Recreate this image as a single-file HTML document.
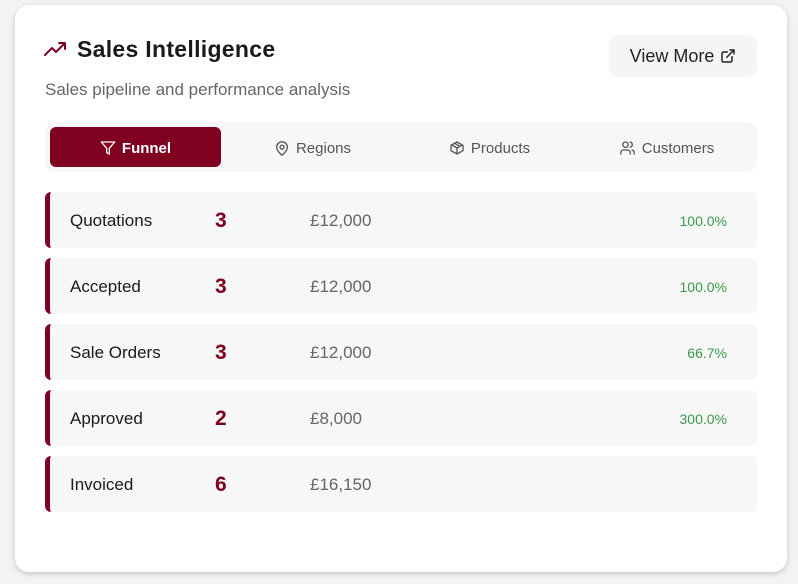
<!DOCTYPE html>
<html><head><meta charset="utf-8"><style>
*{box-sizing:border-box;margin:0;padding:0}
body{width:798px;height:584px;background:#f3f3f3;font-family:"Liberation Sans",sans-serif;position:relative;overflow:hidden}
.card{position:absolute;left:15px;top:5px;width:772px;height:567px;background:#fff;border-radius:14px;box-shadow:0 2px 6px rgba(0,0,0,.18)}
.abs{position:absolute}
.title{left:77px;top:36px;font-size:23px;font-weight:bold;color:#1a1a1a;letter-spacing:.3px}
.sub{left:45px;top:80px;font-size:17px;color:#666}
.btn{left:609px;top:35px;width:148px;height:42px;background:#f5f5f5;border-radius:10px;font-size:18px;color:#222;display:flex;align-items:center;justify-content:center;gap:6px}
.tabs{left:45px;top:122px;width:712px;height:50px;background:#f7f7f7;border-radius:10px}
.tab{position:absolute;top:5px;height:40px;display:flex;align-items:center;justify-content:center;gap:6px;font-size:15px;color:#555;width:171px;padding-top:2px}
.tab.on{background:#800020;color:#fff;font-weight:bold;border-radius:6px}
.row{position:absolute;left:45px;width:712px;height:56px;background:#f7f7f7;border-radius:6px;border-left:5px solid #800020}
.row span{position:absolute;top:0;line-height:58px}
.l{left:20px;font-size:17px;color:#1a1a1a}
.n{left:165px;font-size:21px;font-weight:bold;color:#800020}
.v{left:260px;font-size:17px;color:#666}
.p{right:30px;font-size:14px;color:#3a9a4a}
</style></head><body>
<div class="card"></div>
<svg class="abs" style="left:44px;top:40px" width="24" height="18" viewBox="0 0 24 18" fill="none" stroke="#800020" stroke-width="2" stroke-linecap="round" stroke-linejoin="round"><path d="M1 15l7-7 4 4 9-9M15 3h6v6"/></svg>
<div class="abs title">Sales Intelligence</div>
<div class="abs sub">Sales pipeline and performance analysis</div>
<div class="abs btn">View More <svg width="16" height="16" viewBox="0 0 24 24" fill="none" stroke="#222" stroke-width="2.2" stroke-linecap="round" stroke-linejoin="round"><path d="M18 13v6a2 2 0 0 1-2 2H5a2 2 0 0 1-2-2V8a2 2 0 0 1 2-2h6M15 3h6v6M10 14L21 3"/></svg></div>
<div class="abs tabs">
<div class="tab on" style="left:5px"><svg width="16" height="16" viewBox="0 0 24 24" fill="none" stroke="#fff" stroke-width="2" stroke-linejoin="round"><path d="M22 3H2l8 9.5V19l4 2v-8.5z"/></svg>Funnel</div>
<div class="tab" style="left:182px"><svg width="16" height="17" viewBox="0 0 24 24" fill="none" stroke="#555" stroke-width="2"><path d="M20 10c0 6-8 12-8 12S4 16 4 10a8 8 0 0 1 16 0z"/><circle cx="12" cy="10" r="3"/></svg>Regions</div>
<div class="tab" style="left:359px"><svg width="16" height="16" viewBox="0 0 24 24" fill="none" stroke="#555" stroke-width="2" stroke-linejoin="round"><path d="M21 16V8l-9-5-9 5v8l9 5z M3.3 7L12 12l8.7-5M12 22V12M7.5 4.3l9 5.2"/></svg>Products</div>
<div class="tab" style="left:536px"><svg width="17" height="16" viewBox="0 0 24 24" fill="none" stroke="#555" stroke-width="2" stroke-linecap="round"><path d="M16 21v-2a4 4 0 0 0-4-4H6a4 4 0 0 0-4 4v2"/><circle cx="9" cy="7" r="4"/><path d="M22 21v-2a4 4 0 0 0-3-3.9M16 3.1a4 4 0 0 1 0 7.8"/></svg>Customers</div>
</div>
<div class="row" style="top:192px"><span class="l">Quotations</span><span class="n">3</span><span class="v">£12,000</span><span class="p">100.0%</span></div>
<div class="row" style="top:258px"><span class="l">Accepted</span><span class="n">3</span><span class="v">£12,000</span><span class="p">100.0%</span></div>
<div class="row" style="top:324px"><span class="l">Sale Orders</span><span class="n">3</span><span class="v">£12,000</span><span class="p">66.7%</span></div>
<div class="row" style="top:390px"><span class="l">Approved</span><span class="n">2</span><span class="v">£8,000</span><span class="p">300.0%</span></div>
<div class="row" style="top:456px"><span class="l">Invoiced</span><span class="n">6</span><span class="v">£16,150</span></div>
</body></html>
